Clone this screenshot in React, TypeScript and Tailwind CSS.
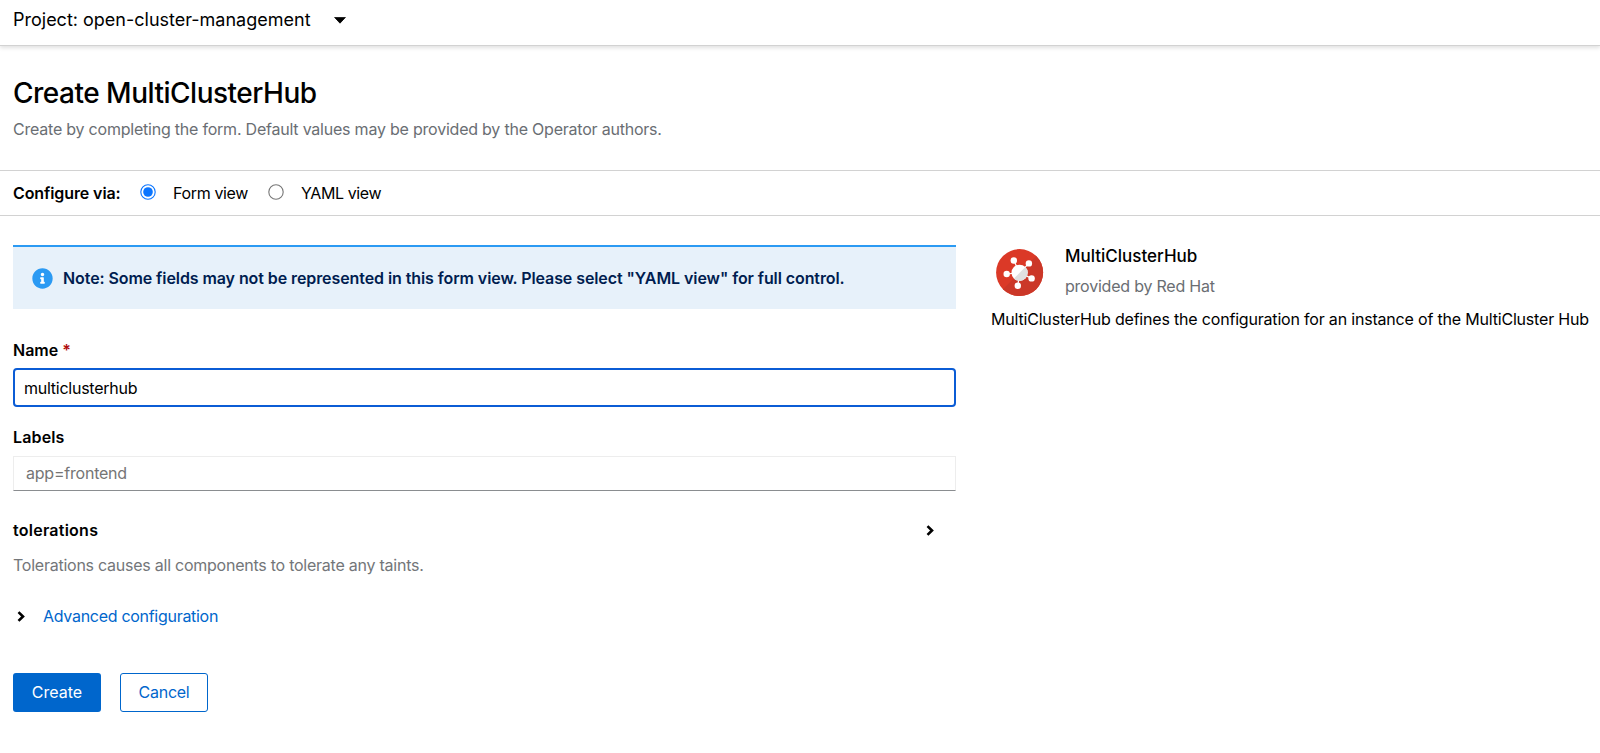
const HubLogo = () => (
  <svg viewBox="0 0 48 48" className="size-[48px] shrink-0" aria-hidden="true">
    <circle cx="23.6" cy="23.6" r="23.5" fill="#db3927" />
    <path d="M40.22 6.98A23.5 23.5 0 0 1 6.98 40.22z" fill="#cb3728" />
    <g stroke="#fff" strokeWidth="1.2">
      <path d="M23.6 23.8 17.8 11.5M23.6 23.8 32.9 14.4M23.6 23.8 10.7 25M23.6 23.8 35.6 29.4M23.6 23.8 21.8 36.8" />
    </g>
    <g fill="#fff">
      <circle cx="17.8" cy="11.5" r="3.2" />
      <circle cx="32.9" cy="14.4" r="3.2" />
      <circle cx="10.7" cy="25" r="3.2" />
      <circle cx="35.6" cy="29.4" r="3.2" />
      <circle cx="21.8" cy="36.8" r="3.2" />
      <circle cx="23.6" cy="23.8" r="8.1" />
    </g>
    <path d="M29.33 18.07A8.1 8.1 0 0 1 17.87 29.53z" fill="#e0e0e0" />
  </svg>
);

const Chevron = () => (
  <svg viewBox="0 0 8 11" className="h-[11px] w-[8px] shrink-0" fill="none" stroke="#000" strokeWidth="2.6" aria-hidden="true">
    <path d="M1.5 1.1 6 5.5 1.5 9.9" />
  </svg>
);

const InfoIcon = () => (
  <svg viewBox="0 0 512 512" className="size-[21px] shrink-0" fill="#2b9af3" aria-hidden="true">
    <circle cx="256" cy="256" r="200" fill="#fff" />
    <path d="M256 8C119.043 8 8 119.083 8 256c0 136.997 111.043 248 248 248s248-111.003 248-248C504 119.083 392.957 8 256 8zm0 110c23.196 0 42 18.804 42 42s-18.804 42-42 42-42-18.804-42-42 18.804-42 42-42zm56 254c0 6.627-5.373 12-12 12h-88c-6.627 0-12-5.373-12-12v-24c0-6.627 5.373-12 12-12h12v-64h-12c-6.627 0-12-5.373-12-12v-24c0-6.627 5.373-12 12-12h64c6.627 0 12 5.373 12 12v100h12c6.627 0 12 5.373 12 12v24z" />
  </svg>
);

const Radio = ({ checked = false }: { checked?: boolean }) => (
  <svg viewBox="0 0 16 16" className="-mt-[3px] size-[16px] shrink-0" role="radio" aria-checked={checked}>
    <circle cx="8" cy="8" r="7.2" fill="#fff" stroke={checked ? '#0a75ff' : '#767676'} strokeWidth="1.1" />
    {checked && <circle cx="8" cy="8" r="4.8" fill="#0a75ff" />}
  </svg>
);

export default function App() {
  return (
    <div className="h-[753px] w-[1600px] overflow-hidden bg-white font-['Inter',sans-serif] text-base leading-6 text-black">
      <header className="flex h-[46px] items-start border-b border-[#d2d2d2] pl-[13px] pt-[8px] shadow-[0_2px_4px_rgba(0,0,0,0.12)]">
        <button className="flex items-center text-[18px]">
          <span>Project: open-cluster-management</span>
          <svg viewBox="0 0 12 7" className="ml-[23px] h-[7px] w-[12px]" aria-hidden="true">
            <path d="M.6.4h10.8L6 6.2z" stroke="#000" strokeWidth=".8" strokeLinejoin="round" />
          </svg>
        </button>
      </header>

      <section className="h-[124px] pl-[13px] pt-[29px]">
        <h1 className="text-[28px] font-medium leading-9 tracking-[-0.5px]">Create MultiClusterHub</h1>
        <p className="mt-[6px] tracking-[-0.22px] text-[#6a6e73]">
          Create by completing the form. Default values may be provided by the Operator authors.
        </p>
      </section>

      <div className="flex h-[46px] items-center border-y border-[#d2d2d2] pl-[13px]">
        <span className="w-[127px] font-semibold tracking-[-0.1px]">Configure via:</span>
        <Radio checked />
        <span className="ml-[17px] w-[95px] tracking-[-0.35px]">Form view</span>
        <Radio />
        <span className="ml-[17px] tracking-[-0.4px]">YAML view</span>
      </div>

      <main className="flex pl-[13px] pt-[28px]">
        <form className="flex w-[943px] flex-col">
          <div className="mt-px flex h-[64px] items-center border-t-2 border-[#2b9af3] bg-[#e7f1fa] pl-[19px]">
            <InfoIcon />
            <span className="ml-[10px] font-semibold tracking-[-0.084px] text-[#001d50]">
              Note: Some fields may not be represented in this form view. Please select "YAML view" for full control.
            </span>
          </div>

          <label className="mt-[29px] font-semibold">
            Name <span className="text-[#b00d0d]">*</span>
          </label>
          <input
            className="mt-[6px] h-[39px] rounded-[4px] border-2 border-[#0b5cd5] pl-[9px] tracking-[-0.25px] outline-none"
            defaultValue="multiclusterhub"
          />

          <label className="mt-[18px] font-semibold tracking-[0.14px]">Labels</label>
          <input
            className="mt-[7px] h-[35px] border border-[#ededed] border-b-[#8a8d90] pb-px pl-[12px] tracking-[-0.22px] outline-none placeholder:text-[#757575]"
            placeholder="app=frontend"
          />

          <div className="mt-[27px] flex items-center justify-between pr-[22px]">
            <span className="font-semibold tracking-[0.25px]">tolerations</span>
            <Chevron />
          </div>
          <p className="mt-[11px] tracking-[-0.245px] text-[#737679]">
            Tolerations causes all components to tolerate any taints.
          </p>

          <div className="mt-[27px] flex items-center pl-[4px]">
            <Chevron />
            <span className="ml-[18px] tracking-[-0.29px] text-[#0066cc]">Advanced configuration</span>
          </div>

          <div className="mt-[45px] flex gap-[19px]">
            <button type="button" className="h-[39px] w-[88px] rounded-[3px] bg-[#0066cc] pb-px text-white">
              Create
            </button>
            <button type="button" className="h-[39px] w-[88px] rounded-[3px] border border-[#0066cc] pb-px tracking-[-0.25px] text-[#0066cc]">
              Cancel
            </button>
          </div>
        </form>

        <aside className="ml-[35px] w-[608px] shrink-0">
          <div className="flex">
            <div className="pl-[5px] pt-[5px]">
              <HubLogo />
            </div>
            <div className="ml-[21px]">
              <h2 className="text-[17px] font-medium">MultiClusterHub</h2>
              <p className="mt-[6px] tracking-[-0.22px] text-[#6a6e73]">provided by Red Hat</p>
            </div>
          </div>
          <p className="mt-[9px] whitespace-nowrap tracking-[-0.19px]">
            MultiClusterHub defines the configuration for an instance of the MultiCluster Hub
          </p>
        </aside>
      </main>
    </div>
  );
}
